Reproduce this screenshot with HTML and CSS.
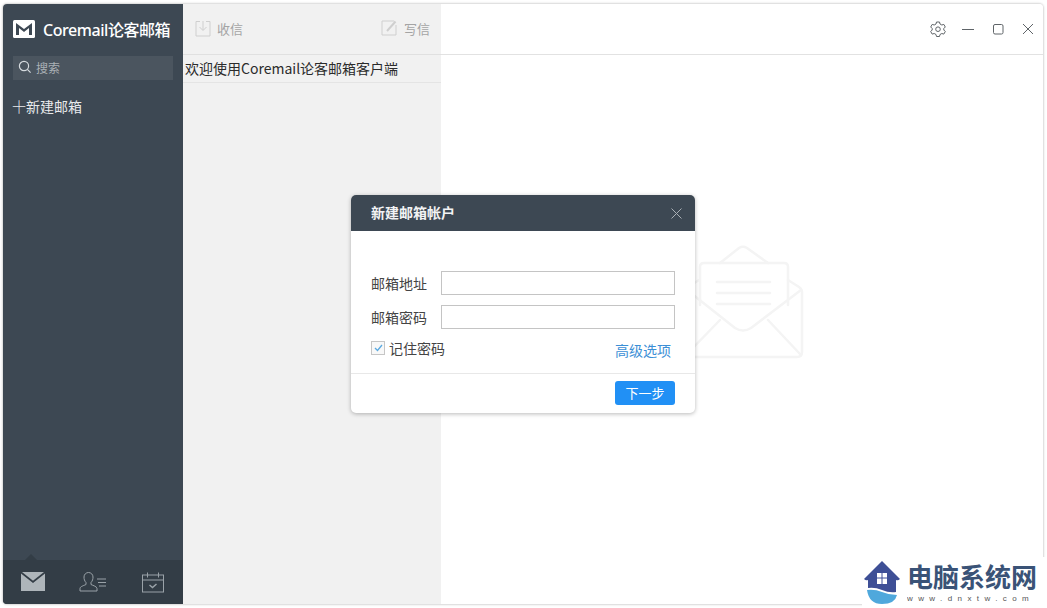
FILE: index.html
```html
<!DOCTYPE html>
<html lang="zh">
<head>
<meta charset="utf-8">
<title>Coremail论客邮箱</title>
<link rel="stylesheet" href="styles.css">
</head>
<body>
<div class="window">
  <aside class="sidebar">
    <div class="brand">
      <svg class="brand-icon" width="22" height="18" viewBox="0 0 22 18"><rect width="22" height="18" rx="1.500" fill="#fff"/><path d="M3 3l8 6 8-6v12h-3V8l-5 4-5-4v7H3z" fill="#3d4853"/></svg>
      <span class="brand-name">Coremail论客邮箱</span>
    </div>
    <div class="search">
      <svg width="14" height="14" viewBox="0 0 14 14" fill="none" stroke="#d5dade" stroke-width="1.200"><circle cx="6" cy="6" r="4.600"/><path d="M9.400 9.400l3.200 3.200"/></svg>
      <span>搜索</span>
    </div>
    <div class="new-mailbox"><span class="plus">十</span>新建邮箱</div>
    <nav class="tabs">
      <span class="tab-arrow"></span>
      <svg class="tab" width="26" height="20" viewBox="0 0 26 20"><path d="M1 1.500L13 11 25 1.500V19H1z" fill="#aeb5ba"/><path d="M2 0h22L13 8.800z" fill="#aeb5ba"/></svg>
      <svg class="tab" width="30" height="20" viewBox="0 0 30 20" fill="none" stroke="#9aa2a8" stroke-width="1"><path d="M1 19v-2.500c0-2 4-3 6-4v-2C5.500 9 5 7 5 5c0-2.500 2-4.500 4.500-4.500S14 2.500 14 5c0 2-.5 4-2 5.500v2c2 1 6 2 6 4V19z"/><path d="M18 7h9M19 10.500h8M20 14h7"/></svg>
      <svg class="tab" width="24" height="21" viewBox="0 0 24 21" fill="none" stroke="#9aa2a8" stroke-width="1"><rect x="1.500" y="3" width="21" height="17"/><path d="M1.500 8h21M6.500 0.500v5M17.500 0.500v5"/><path d="M8.500 13l3 2.500 4-3.500" stroke-width="1.500"/></svg>
    </nav>
  </aside>
  <section class="list">
    <header class="list-head">
      <div class="tool">
        <svg width="16" height="17" viewBox="0 0 16 17" fill="none" stroke="#cfcfcf"><path d="M5 1.500H1v14.500h14V1.500h-4"/><path d="M8 1v9M4.500 7L8 10.500 11.500 7"/></svg>
        <span>收信</span>
      </div>
      <div class="tool">
        <svg width="17" height="16" viewBox="0 0 17 16" fill="none" stroke="#cfcfcf"><path d="M13 1H1v14h14V5"/><path d="M6 11L14.500 1.500" stroke-width="2"/></svg>
        <span>写信</span>
      </div>
    </header>
    <div class="welcome">欢迎使用Coremail论客邮箱客户端</div>
  </section>
  <main class="content">
    <header class="titlebar">
      <svg class="gear" width="16" height="16" viewBox="0 0 16 16" fill="none" stroke="#5f6468" stroke-width="1"><path d="M6.500 1h3l.5 2 1.800 1 2-.6 1.500 2.600-1.500 1.500v1.500l1.500 1.500-1.500 2.600-2-.6-1.800 1-.5 2h-3l-.5-2-1.800-1-2 .6L.7 10.500l1.500-1.500V7.500L.7 6l1.500-2.600 2 .6L6 3z"/><circle cx="8" cy="8.200" r="2.300"/></svg>
      <svg width="12" height="12" viewBox="0 0 12 12" stroke="#5f6468"><path d="M0 6.500h12"/></svg>
      <svg width="12" height="12" viewBox="0 0 12 12" fill="none" stroke="#5f6468"><rect x="1.500" y="1.500" width="9.500" height="9.500" rx="1.500"/></svg>
      <svg width="12" height="12" viewBox="0 0 12 12" stroke="#5f6468"><path d="M1 1l10 10M11 1L1 11"/></svg>
    </header>
  </main>
</div>

<svg class="bg-mail" width="120" height="114" viewBox="0 0 120 114" fill="none" stroke="#f4f4f4" stroke-width="2.500" stroke-linejoin="round" stroke-linecap="round"><path d="M36 18L55 3q4-2.500 8 0l21 15"/><path d="M104 35l11 7q3 2 3 5v60q0 5-5 5H6q-5 0-5-5V47q0-3 3-5l11-7"/><path d="M16 60V22q0-4 4-4h80q4 0 4 4v38"/><path d="M33 37h53M33 48h53M33 59h53"/><path d="M3 45l48 38q8 5 16 0l50-38"/><path d="M36 75L3 109M84 75l32 34"/></svg>

<div class="dialog">
  <div class="dialog-head">
    <span>新建邮箱帐户</span>
    <svg width="11" height="11" viewBox="0 0 11 11" stroke="#a9afb4"><path d="M.5.500l10 10M10.500.500l-10 10"/></svg>
  </div>
  <div class="dialog-body">
    <div class="field"><label>邮箱地址</label><div class="input"></div></div>
    <div class="field"><label>邮箱密码</label><div class="input"></div></div>
    <div class="options">
      <div class="remember">
        <span class="check"><svg width="9" height="8" viewBox="0 0 9 8" fill="none" stroke="#5aa9e0" stroke-width="1.300"><path d="M1 4l2.500 2.500L8 1"/></svg></span>
        <span>记住密码</span>
      </div>
      <a class="advanced">高级选项</a>
    </div>
  </div>
  <div class="dialog-foot"><button class="next">下一步</button></div>
</div>

<div class="mark">
  <svg class="mark-logo" width="36" height="43" viewBox="0 0 36 43"><path d="M18 0L0 18q2 2 4 1v8q7-1 14 2t14 2V19q2 1 4-1z" fill="#3e4f96"/><path d="M13 12h10v11H13z" fill="#fff"/><path d="M18 12v11M13 17h10" stroke="#3e4f96"/><path d="M3 29q8-1 15 2t15 3q-2 9-15 9Q5 43 3 29z" fill="#4fa8dc"/></svg>
  <div class="mark-text">
    <div class="mark-cn">电脑系统网</div>
    <div class="mark-url">www.dnxtw.com</div>
  </div>
</div>
</body>
</html>
```

FILE: styles.css
```css
* { box-sizing: border-box; }
html, body { margin: 0; height: 100%; }
body {
  width: 1047px;
  height: 608px;
  overflow: hidden;
  padding: 4px 4px 4px 3px;
  background: #fff;
  font-family: "Noto Sans CJK SC", "Liberation Sans", sans-serif;
  font-size: 14px;
  color: #333;
  position: relative;
}
.window {
  display: flex;
  height: 600px;
  border-radius: 4px;
  overflow: hidden;
  background: #fff;
  box-shadow: 0 0 2px 1px rgba(0,0,0,.16);
}
.sidebar {
  width: 180px;
  flex: none;
  display: flex;
  flex-direction: column;
  background: #3d4853;
  position: relative;
}
.brand {
  height: 52px;
  padding: 0 0 3px 10px;
  display: flex;
  align-items: center;
  gap: 8px;
}
.brand-name {
  color: #fff;
  font-family: "Noto Sans", "Noto Sans CJK SC", sans-serif;
  font-size: 16px;
  font-weight: 500;
  letter-spacing: -0.45px;
  white-space: nowrap;
}
.search {
  margin: 0 10px;
  height: 24px;
  background: #4b555f;
  display: flex;
  align-items: center;
  gap: 4px;
  padding: 0 0 2px 5px;
  color: #aab0b5;
  font-size: 12px;
}
.new-mailbox {
  margin-top: 15px;
  padding-left: 9px;
  color: #e8eaec;
  font-size: 14px;
  line-height: 22px;
}
.plus { font-weight: 300; }
.tabs {
  margin-top: auto;
  height: 44px;
  background: #333d46;
  display: flex;
  align-items: center;
  justify-content: space-between;
  padding: 0 18px 0 17px;
  position: relative;
}
.tab-arrow {
  position: absolute;
  left: 22px;
  top: -6px;
  border: 6px solid transparent;
  border-top: 0;
  border-bottom-color: #333d46;
}
.list {
  width: 258px;
  flex: none;
  background: #f1f1f1;
}
.list-head {
  height: 51px;
  border-bottom: 1px solid #e0e0e0;
  display: flex;
  align-items: center;
  justify-content: space-between;
  padding: 0 11px 2px 12px;
  color: #a4a4a4;
  font-size: 13px;
}
.tool { display: flex; align-items: center; gap: 6px; }
.welcome {
  height: 28px;
  border-bottom: 1px solid #e4e4e4;
  padding-left: 2px;
  line-height: 27px;
  font-size: 14px;
  color: #2b2b2b;
  white-space: nowrap;
}
.content { flex: 1; background: #fff; }
.titlebar {
  height: 51px;
  border-bottom: 1px solid #e2e2e2;
  display: flex;
  align-items: center;
  justify-content: flex-end;
  gap: 18px;
  padding-right: 9px;
}
.gear { margin-right: -2px; }
.bg-mail { position: absolute; left: 684px; top: 245px; }
.dialog {
  position: absolute;
  left: 351px;
  top: 195px;
  width: 344px;
  height: 218px;
  background: #fff;
  border-radius: 5px;
  box-shadow: 0 1px 4px rgba(0,0,0,.28);
  display: flex;
  flex-direction: column;
  overflow: hidden;
}
.dialog-head {
  height: 36px;
  flex: none;
  background: #3d4853;
  color: #f2f3f4;
  font-size: 14px;
  font-weight: 700;
  display: flex;
  align-items: center;
  justify-content: space-between;
  padding: 0 13px 3px 20px;
}
.dialog-head svg { margin-top: 3px; }
.dialog-body {
  flex: 1;
  padding: 40px 20px 0;
  display: flex;
  flex-direction: column;
  gap: 10px;
}
.field { display: flex; align-items: center; justify-content: space-between; }
.field label { font-size: 14px; color: #444; }
.input {
  width: 234px;
  height: 24px;
  background: #fff;
  border: 1px solid #c4c4c4;
}
.options {
  display: flex;
  justify-content: space-between;
  align-items: center;
  height: 20px;
  margin-top: -1px;
  padding-right: 4px;
}
.remember { display: flex; align-items: center; gap: 4px; color: #444; }
.check {
  width: 14px;
  height: 14px;
  border: 1px solid #c6c6c6;
  background: #f8f8f8;
  display: flex;
  align-items: center;
  justify-content: center;
}
.advanced { color: #3c8fd6; font-size: 14px; position: relative; top: 2px; }
.dialog-foot {
  height: 40px;
  flex: none;
  border-top: 1px solid #e8e8e8;
  display: flex;
  justify-content: flex-end;
  align-items: flex-start;
  padding: 7px 20px 0;
}
.next {
  width: 60px;
  height: 24px;
  border: 0;
  border-radius: 3px;
  background: #2190f5;
  color: #fff;
  font-family: inherit;
  font-size: 13px;
  padding: 0 0 1px;
}
.mark {
  position: absolute;
  right: 0;
  bottom: 0;
  width: 185px;
  height: 51px;
  background: #fff;
  padding: 4px 0 0 2px;
  display: flex;
  gap: 7px;
}
.mark-logo { flex: none; }
.mark-cn {
  font-family: "Noto Sans CJK SC", sans-serif;
  font-weight: 700;
  font-size: 26px;
  line-height: 29px;
  color: #3a5377;
  white-space: nowrap;
}
.mark-url {
  margin-top: 3px;
  font-family: "Liberation Sans", sans-serif;
  font-size: 8px;
  letter-spacing: 5.400px;
  color: #555;
  line-height: 12px;
  white-space: nowrap;
  width: 130px;
  overflow: hidden;
}
```
